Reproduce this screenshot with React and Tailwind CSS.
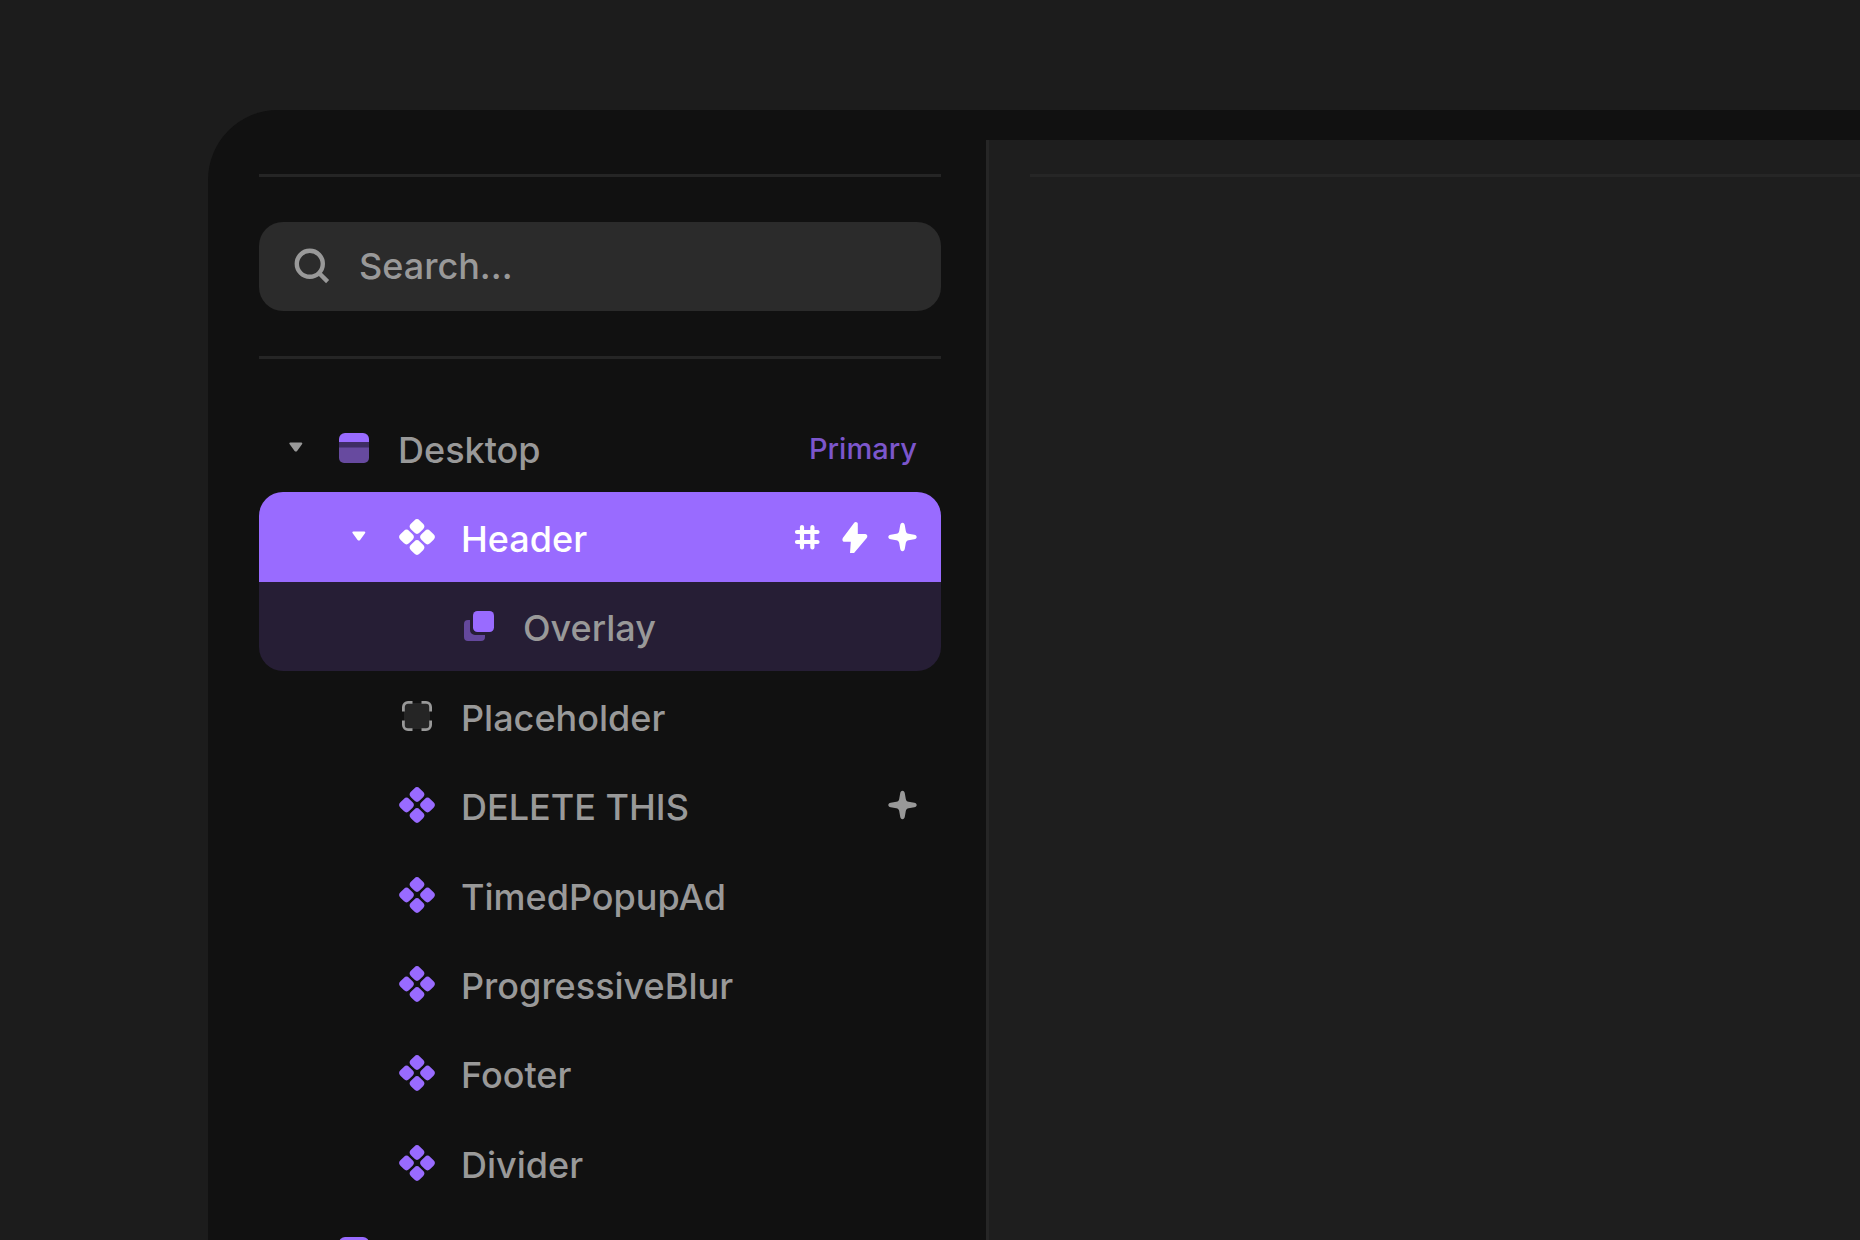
const icons = {
  page: PageIcon,
  component: ComponentIcon,
  stack: StackIcon,
  slot: SlotIcon,
};

const layers = [
  { id: 'desktop', name: 'Desktop', level: 0, icon: 'page', open: true, tag: 'Primary' },
  { id: 'header', name: 'Header', level: 1, icon: 'component', open: true, state: 'selected', marks: ['hash', 'bolt', 'spark'] },
  { id: 'overlay', name: 'Overlay', level: 2, icon: 'stack', state: 'child' },
  { id: 'placeholder', name: 'Placeholder', level: 1, icon: 'slot' },
  { id: 'delete', name: 'DELETE THIS', level: 1, icon: 'component', marks: ['spark'] },
  { id: 'popup', name: 'TimedPopupAd', level: 1, icon: 'component' },
  { id: 'blur', name: 'ProgressiveBlur', level: 1, icon: 'component' },
  { id: 'footer', name: 'Footer', level: 1, icon: 'component' },
  { id: 'divider', name: 'Divider', level: 1, icon: 'component' },
  { id: 'next', name: '', level: 0, icon: 'page' },
];

const indents = ['pl-[19px]', 'pl-[82px]', 'pl-36'];

const rowStyles = {
  selected: 'rounded-t-3xl bg-[#996bff] text-white',
  child: 'rounded-b-3xl bg-[#261e35] text-[#999999]',
  default: 'text-[#999999]',
};

function Caret() {
  return (
    <svg viewBox="0 0 36 36" className="size-9 shrink-0" fill="currentColor" aria-hidden="true">
      <path d="M12.300 12.500h11c1 0 1.300 1 .7 1.800l-4.900 6.600c-.6.8-1.900.8-2.500 0l-4.900-6.600c-.6-.8-.4-1.800.6-1.800z" />
    </svg>
  );
}

function PageIcon() {
  return (
    <svg viewBox="0 0 36 36" className="size-9 shrink-0" aria-hidden="true">
      <path d="M3 12V9a6 6 0 0 1 6-6h18a6 6 0 0 1 6 6v3z" fill="#996bff" />
      <path d="M3 12h30v6H3z" fill="#3e2d63" />
      <path d="M3 17.500h30V28a5 5 0 0 1-5 5H8a5 5 0 0 1-5-5z" fill="#674a9f" />
    </svg>
  );
}

function ComponentIcon({ selected }) {
  return (
    <svg viewBox="0 0 36 36" className="size-9 shrink-0" fill={selected ? '#ffffff' : '#996bff'} aria-hidden="true">
      {[[18, 7.5], [28.5, 18], [18, 28.5], [7.5, 18]].map(([x, y]) => (
        <rect key={`${x}-${y}`} x={x - 6.2} y={y - 6.2} width="12.4" height="12.4" rx="3.800" transform={`rotate(45 ${x} ${y})`} />
      ))}
    </svg>
  );
}

function StackIcon() {
  return (
    <svg viewBox="0 0 36 36" className="size-9 shrink-0" aria-hidden="true">
      <path d="M9 12v10a5 5 0 0 0 5 5h10v2a4 4 0 0 1-4 4H7a4 4 0 0 1-4-4V16a4 4 0 0 1 4-4z" fill="#64489c" />
      <rect x="12" y="3" width="21" height="21" rx="4.500" fill="#996bff" />
    </svg>
  );
}

function SlotIcon() {
  return (
    <svg viewBox="0 0 36 36" className="size-9 shrink-0" fill="none" stroke="#999999" strokeWidth="2.800" aria-hidden="true">
      <rect x="5" y="5" width="26" height="26" rx="5" fill="#252525" stroke="none" />
      <path d="M4.400 13.500V9a4.600 4.600 0 0 1 4.600-4.600h4.500M22.500 4.400H27A4.600 4.600 0 0 1 31.600 9v4.500M31.600 22.500V27a4.600 4.600 0 0 1-4.600 4.600h-4.500M13.500 31.600H9A4.600 4.600 0 0 1 4.400 27v-4.500" />
    </svg>
  );
}

function Mark({ type }) {
  if (type === 'hash') {
    return (
      <svg viewBox="0 0 32 32" className="size-8" fill="none" stroke="currentColor" strokeWidth="4.200" strokeLinecap="round" aria-hidden="true">
        <path d="M13 6v20.500M23.400 6v20.500M8 11h20.500M8 21h20.500" />
      </svg>
    );
  }
  if (type === 'bolt') {
    return (
      <svg viewBox="0 0 32 32" className="size-8" fill="currentColor" aria-hidden="true">
        <path d="M17.200 1.800 6 16.800c-1.200 1.700-.6 4 1.600 4h6.200l-.8 11.200c-.1 1.700 2.300 2.300 3.300.9L29.700 17c1.200-1.700.6-4-1.600-4h-7.300V2.800c0-1.700-2.500-2.500-3.600-1z" />
      </svg>
    );
  }
  return (
    <svg viewBox="0 0 32 32" className="size-8" fill="currentColor" aria-hidden="true">
      <path d="M17.500 1.800c1.300 0 2 1 2.300 2.400l1 5.700c.2 1.500 1.300 2.600 2.800 2.800l5.700 1c1.400.3 2.400 1 2.400 2.300s-1 2-2.400 2.300l-5.700 1c-1.500.2-2.600 1.300-2.800 2.800l-1 5.700c-.3 1.400-1 2.400-2.300 2.400s-2-1-2.300-2.400l-1-5.700c-.2-1.500-1.300-2.600-2.800-2.800l-5.700-1c-1.400-.3-2.400-1-2.400-2.300s1-2 2.400-2.300l5.700-1c1.500-.2 2.600-1.300 2.800-2.800l1-5.700c.3-1.400 1-2.400 2.300-2.400z" />
    </svg>
  );
}

function LayerRow({ layer }) {
  const Icon = icons[layer.icon];
  return (
    <li className="flex">
      <button type="button" aria-label={layer.name || 'Layer'} className={`flex flex-1 items-center pr-6 text-left ${indents[layer.level]} ${rowStyles[layer.state || 'default']}`}>
        {layer.open ? <Caret /> : <span className="size-9 shrink-0" />}
        <span className="ml-[22px]"><Icon selected={layer.state === 'selected'} /></span>
        <span className="ml-[26px] flex-1 pt-1">{layer.name}</span>
        {layer.tag && <span className="pt-[2px] text-[29px] text-[#7c56cc]">{layer.tag}</span>}
        {layer.marks && (
          <span className="flex gap-4">
            {layer.marks.map((mark) => <Mark key={mark} type={mark} />)}
          </span>
        )}
      </button>
    </li>
  );
}

function SearchBox() {
  return (
    <label className="flex h-[89px] items-center gap-7 rounded-3xl bg-[#2b2b2b] pr-6 pl-[34px] text-[#999999]">
      <svg viewBox="0 0 38 38" className="size-[38px] shrink-0" fill="none" stroke="currentColor" strokeWidth="4.400" aria-hidden="true">
        <circle cx="16.800" cy="15.800" r="13" />
        <path d="m26 25 8.600 8.600" />
      </svg>
      <input type="text" aria-label="Search layers" placeholder="Search..." className="min-w-0 flex-1 bg-transparent pb-[2px] outline-none placeholder:text-[#999999] placeholder:opacity-100" />
    </label>
  );
}

export default function App() {
  return (
    <div className="h-screen overflow-hidden bg-[#1c1c1c] pt-[110px] pl-[208px] font-['Inter',sans-serif] text-[36px] leading-none font-medium">
      <div className="flex h-full overflow-hidden rounded-tl-[70px] bg-[#111111]">
        <aside className="w-[778px] shrink-0 pt-16 pr-[45px] pl-[51px]">
          <div className="border-y-[3px] border-[#252525] py-[45px]">
            <SearchBox />
          </div>
          <ul className="mt-11 grid h-[894px] auto-rows-fr">
            {layers.map((layer) => <LayerRow key={layer.id} layer={layer} />)}
          </ul>
        </aside>
        <main className="mt-[30px] flex-1 border-l-[3px] border-[#262626] bg-[#1e1e1e] pt-[34px] pl-[41px]">
          <hr className="border-t-[3px] border-[#262626]" />
        </main>
      </div>
    </div>
  );
}
